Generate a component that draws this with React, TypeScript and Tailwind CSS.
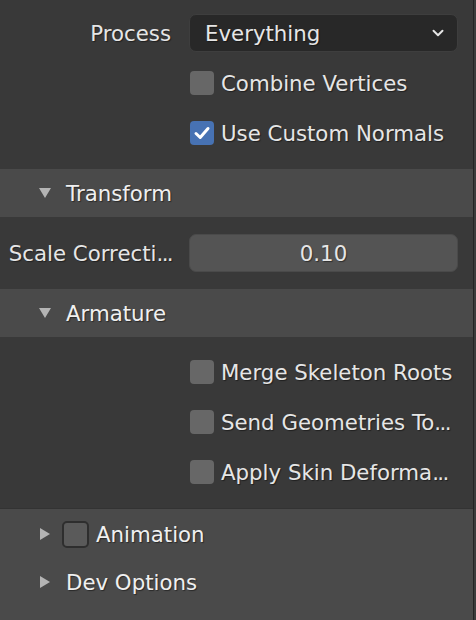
import { ChevronDown } from "lucide-react";

const font = "font-['DejaVu_Sans',sans-serif]";
const txt = "text-[21.3px] pt-[2px] [text-shadow:1px_1px_1px_rgba(0,0,0,0.45)]";

const Dots = () => <span className="tracking-[-1.6px]">...</span>;

const Check = ({ checked = false }: { checked?: boolean }) => (
  <div
    className={`w-[24px] h-[24px] rounded-[4px] flex items-center justify-center shrink-0 ${
      checked ? "bg-[#4772b3]" : "bg-[#676767]"
    }`}
  >
    {checked && (
      <svg width="18" height="18" viewBox="0 0 18 18">
        <path d="M3 9.5 L7.2 13.5 L15 4.5" fill="none" stroke="#ffffff" strokeWidth="3" strokeLinecap="round" strokeLinejoin="round" />
      </svg>
    )}
  </div>
);

const CheckRow = ({ label, cut, checked }: { label: string; cut?: boolean; checked?: boolean }) => (
  <div className="h-[50px] flex items-center pl-[190px]">
    <Check checked={checked} />
    <span className={`ml-[7px] text-[#e6e6e6] whitespace-nowrap ${txt}`}>
      {label}
      {cut && <Dots />}
    </span>
  </div>
);

const Arrow = ({ open }: { open: boolean }) => (
  <svg width="12" height="12" viewBox="0 0 12 12" className="shrink-0">
    {open ? <polygon points="0,1 12,1 6,11" fill="#b4b4b4" /> : <polygon points="1,0 11,6 1,12" fill="#b4b4b4" />}
  </svg>
);

const Header = ({ label, open, toggle }: { label: string; open: boolean; toggle?: boolean }) => (
  <div className="h-[48px] flex items-center pl-[39px] bg-[#4a4a4a]">
    <Arrow open={open} />
    {toggle ? (
      <>
        <div className="ml-[11px] w-[27px] h-[27px] rounded-[5px] bg-[#5a5a5a] border-2 border-[#2e2e2e]" />
        <span className={`ml-[7px] text-[#f0f0f0] ${txt}`}>{label}</span>
      </>
    ) : (
      <span className={`ml-[15px] text-[#f0f0f0] ${txt}`}>{label}</span>
    )}
  </div>
);

export default function App() {
  return (
    <div className={`w-[476px] h-[620px] flex bg-[#393939] overflow-hidden ${font}`}>
      <div className="flex-1 flex flex-col">
        {/* Main options */}
        <div className="pt-[8px] pb-[11px]">
          <div className="h-[50px] flex items-center">
            <div className={`w-[189px] pr-[18px] text-right text-[#e6e6e6] ${txt}`}>Process</div>
            <div className="w-[269px] h-[38px] rounded-[7px] bg-[#282828] border border-[#3e3e3e] flex items-center justify-between pl-[15px] pr-[10px]">
              <span className={`text-[#e6e6e6] ${txt}`}>Everything</span>
              <ChevronDown size={18} strokeWidth={2.6} color="#e6e6e6" />
            </div>
          </div>
          <CheckRow label="Combine Vertices" />
          <CheckRow label="Use Custom Normals" checked />
        </div>

        <Header label="Transform" open />
        <div className="h-[72px] flex items-center">
          <div className={`w-[189px] pr-[17px] text-right text-[#e6e6e6] whitespace-nowrap ${txt}`}>
            Scale Correcti<Dots />
          </div>
          <div className="w-[269px] h-[38px] rounded-[7px] bg-[#545454] border border-[#4a4a4a] flex items-center justify-center">
            <span className={`text-[#e6e6e6] ${txt}`}>0.10</span>
          </div>
        </div>

        <Header label="Armature" open />
        <div className="pt-[10px] pb-[11px]">
          <CheckRow label="Merge Skeleton Roots" />
          <CheckRow label="Send Geometries To" cut />
          <CheckRow label="Apply Skin Deforma" cut />
        </div>

        <div className="flex-1 bg-[#4a4a4a] pt-px border-t border-[#333]">
          <Header label="Animation" open={false} toggle />
          <Header label="Dev Options" open={false} />
        </div>
      </div>
      <div className="w-px bg-[#242424]" />
      <div className="w-[2px] bg-[#3c3c3c]" />
    </div>
  );
}
